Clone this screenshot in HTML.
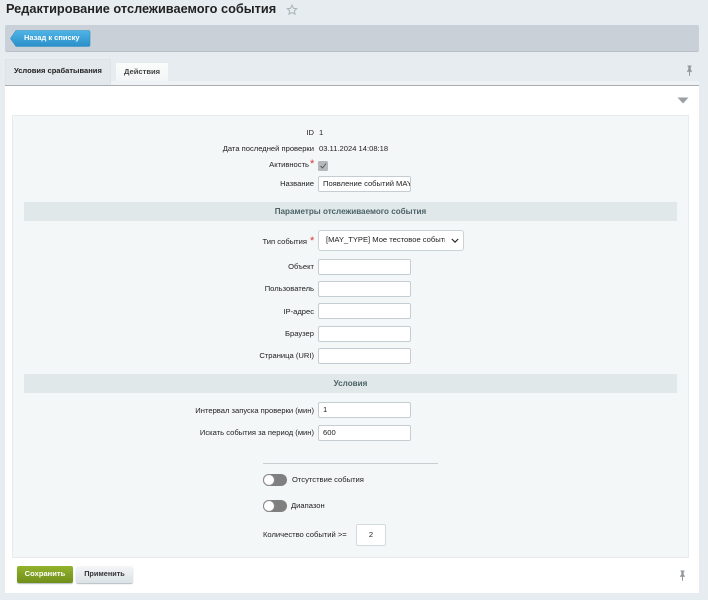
<!DOCTYPE html>
<html lang="ru"><head><meta charset="utf-8"><title>Редактирование отслеживаемого события</title>
<style>
html,body{margin:0;padding:0;width:708px;height:600px;overflow:hidden;background:#e6ecef;font-family:"Liberation Sans",Arial,sans-serif;color:#222}
.a{position:absolute}
.l{position:absolute;right:394px;font-size:7.6px;line-height:12px;white-space:nowrap;color:#222}
.v{position:absolute;left:319px;font-size:7.6px;line-height:12px;color:#222;white-space:nowrap}
.i{position:absolute;left:318px;width:93px;height:16px;box-sizing:border-box;background:#fff;border:1px solid #c4ced2;border-radius:2px;font-size:7.6px;line-height:14px;padding-left:4px;overflow:hidden;white-space:nowrap;color:#222}
.h{position:absolute;left:24px;width:653px;height:19px;background:#e0e8ea;text-align:center;font-size:8.1px;font-weight:bold;line-height:19px;color:#4b6267}
.t{position:absolute;width:24px;height:12px;left:263px;border-radius:6px;background:#7f7f7f}
.t i{position:absolute;left:0;top:0;width:12px;height:12px;box-sizing:border-box;border-radius:50%;background:#fff;border:1px solid #8a8a8a}
.s{position:absolute;left:310px;color:#d33;font-size:11px;line-height:10px}
</style></head><body>
<div class="a" style="left:6px;top:0;font-size:12.75px;font-weight:bold;line-height:17px;color:#222;white-space:nowrap">Редактирование отслеживаемого события</div>
<svg class="a" style="left:286px;top:4px" width="12" height="12" viewBox="0 0 12 12"><path d="M6 1.200l1.400 3.100 3.300.4-2.400 2.200.7 3.300L6 8.500l-3 1.700.7-3.300-2.400-2.200 3.300-.4z" fill="#e8edf0" stroke="#a9b2b8" stroke-width="1"/></svg>

<div class="a" style="left:5px;top:25px;width:694px;height:27px;background:#c9d0d8;border-radius:2px;border-bottom:1px solid #b9c0c8;box-sizing:border-box"></div>
<svg class="a" style="left:10px;top:30px" width="81" height="18" viewBox="0 0 81 18"><defs><linearGradient id="b" x1="0" y1="0" x2="0" y2="1"><stop offset="0" stop-color="#4fb4e6"/><stop offset="1" stop-color="#2a8fc9"/></linearGradient></defs><path d="M6 0.500H78.500a1.500 1.500 0 0 1 1.500 1.500V15a1.500 1.500 0 0 1-1.500 1.500H6L0.500 8.500z" fill="url(#b)" stroke="#2f8fc4" stroke-width=".6"/></svg>
<div class="a" style="left:24px;top:31px;font-size:7.5px;font-weight:bold;line-height:13px;color:#fff;white-space:nowrap">Назад к списку</div>

<div class="a" style="left:5px;top:81px;width:694px;height:4px;background:#eef2f4"></div>
<div class="a" style="left:5px;top:59px;width:106px;height:27px;box-sizing:border-box;background:#e2e8eb;border:1px solid #dde3e6;border-bottom:0;border-radius:2px 2px 0 0"></div>
<div class="a" style="left:14px;top:64px;font-size:7.55px;font-weight:bold;line-height:13px;color:#222;white-space:nowrap">Условия срабатывания</div>
<div class="a" style="left:115px;top:62px;width:54px;height:19px;background:linear-gradient(#fbfcfc,#f2f5f6);box-sizing:border-box;border:1px solid #e6ebee;border-bottom:0"></div>
<div class="a" style="left:124px;top:65px;font-size:7.6px;font-weight:bold;line-height:13px;color:#444;white-space:nowrap">Действия</div>
<svg class="a" style="left:685px;top:65px" width="9" height="11" viewBox="0 0 9 11"><path d="M2.500 0.500h4v1H5.700v3.200l1.300 1.300v.8H5v4H4v-4H2v-.8l1.300-1.300V1.500H2.500z" fill="#8f979c"/></svg>

<div class="a" style="left:5px;top:85px;width:694px;height:508px;background:#fff;border-top:1px solid #a9aeb1;box-sizing:border-box"></div>
<svg class="a" style="left:677px;top:97px" width="12" height="7" viewBox="0 0 12 7"><path d="M0.500 0.500h11L6 6.500z" fill="#9aa0a4"/></svg>
<div class="a" style="left:12px;top:115px;width:677px;height:443px;background:#f4f7f8;box-sizing:border-box;border:1px solid #e6ecee"></div>

<div class="l" style="top:127px">ID</div><div class="v" style="top:127px">1</div>
<div class="l" style="top:143px">Дата последней проверки</div><div class="v" style="top:143px">03.11.2024 14:08:18</div>
<div class="l" style="top:159px;right:399px">Активность</div><div class="s" style="top:159px">*</div>
<svg class="a" style="left:318px;top:161px" width="10" height="10" viewBox="0 0 10 10"><rect width="10" height="10" rx="1.500" fill="#b3b8bb"/><path d="M2.500 5l2 2 3.500-4.500" fill="none" stroke="#555" stroke-width=".9"/></svg>
<div class="l" style="top:178px">Название</div><div class="i" style="top:176px">Появление событий MAY_T</div>

<div class="h" style="top:202px">Параметры отслеживаемого события</div>
<div class="l" style="top:236px;right:401px">Тип события</div><div class="s" style="top:236px">*</div>
<div class="a" style="left:318px;top:230px;width:146px;height:21px;box-sizing:border-box;background:#fff;border:1px solid #c9d2d6;border-radius:3px"></div>
<div class="a" style="left:326px;top:234px;width:119px;overflow:hidden;font-size:7.6px;line-height:12px;white-space:nowrap;color:#222">[MAY_TYPE] Мое тестовое событие</div>
<svg class="a" style="left:451px;top:238px" width="8" height="6" viewBox="0 0 8 6"><path d="M0.800 1l3.200 3.200L7.200 1" fill="none" stroke="#222" stroke-width="1.100"/></svg>

<div class="l" style="top:261px">Объект</div><div class="i" style="top:259px"></div>
<div class="l" style="top:283px">Пользователь</div><div class="i" style="top:281px"></div>
<div class="l" style="top:306px">IP-адрес</div><div class="i" style="top:303px"></div>
<div class="l" style="top:328px">Браузер</div><div class="i" style="top:326px"></div>
<div class="l" style="top:350px">Страница (URI)</div><div class="i" style="top:348px"></div>

<div class="h" style="top:374px">Условия</div>
<div class="l" style="top:405px">Интервал запуска проверки (мин)</div><div class="i" style="top:402px">1</div>
<div class="l" style="top:427px">Искать события за период (мин)</div><div class="i" style="top:425px">600</div>

<div class="a" style="left:263px;top:463px;width:175px;height:1px;background:#c9ced1"></div>
<div class="t" style="top:474px"><i></i></div>
<div class="a" style="left:292px;top:474px;font-size:7.6px;line-height:12px;white-space:nowrap">Отсутствие события</div>
<div class="t" style="top:500px"><i></i></div>
<div class="a" style="left:291px;top:500px;font-size:7.6px;line-height:12px;white-space:nowrap">Диапазон</div>
<div class="a" style="left:263px;top:529px;font-size:7.6px;line-height:12px;white-space:nowrap">Количество событий &gt;=</div>
<div class="a" style="left:356px;top:524px;width:30px;height:22px;box-sizing:border-box;background:#fff;border:1px solid #d3dadd;border-radius:2px;text-align:center;font-size:7.6px;line-height:20px">2</div>

<div class="a" style="left:17px;top:566px;width:56px;height:17px;border-radius:2px;background:linear-gradient(#93b22c,#6f8f1b);box-shadow:0 1px 1px #b4bcc0;text-align:center;font-size:7.6px;font-weight:bold;line-height:16px;color:#fff">Сохранить</div>
<div class="a" style="left:76px;top:566px;width:57px;height:17px;border-radius:2px;background:linear-gradient(#f4f6f7,#dbe2e6);box-shadow:0 1px 1px #b4bcc0;text-align:center;font-size:7.3px;font-weight:bold;line-height:16px;color:#333">Применить</div>
<svg class="a" style="left:678px;top:570px" width="9" height="11" viewBox="0 0 9 11"><path d="M2.500 0.500h4v1H5.700v3.200l1.300 1.300v.8H5v4H4v-4H2v-.8l1.300-1.300V1.500H2.500z" fill="#8f979c"/></svg>
</body></html>
